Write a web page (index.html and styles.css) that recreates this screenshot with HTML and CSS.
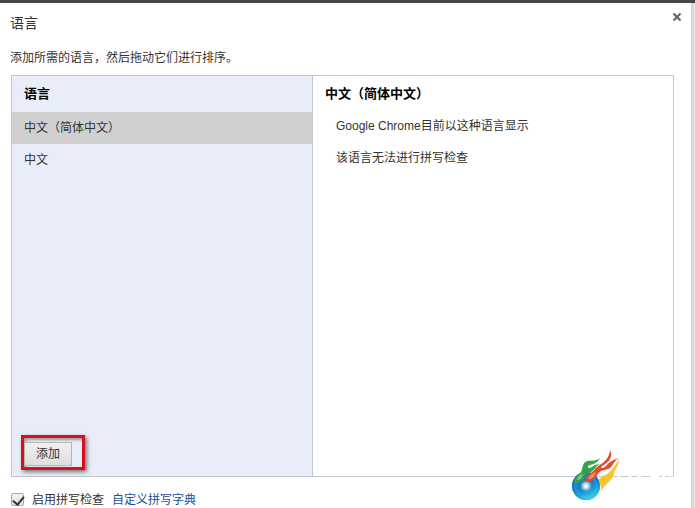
FILE: index.html
```html
<!DOCTYPE html>
<html lang="zh-CN">
<head>
  <meta charset="UTF-8" />
  <meta name="viewport" content="width=device-width, initial-scale=1.0" />
  <title>语言</title>
  <link rel="stylesheet" href="styles.css">
</head>
<body>
  <div class="dialog">
    <header class="dialog-header">
      <h1>语言</h1>
      <button type="button" class="close" aria-label="关闭">
        <svg width="10" height="10" viewBox="0 0 10 10"><path d="M1.5 1.5L8.5 8.5M8.5 1.5L1.5 8.5" stroke="#666" stroke-width="2.2" /></svg>
      </button>
    </header>
    <p class="intro">添加所需的语言，然后拖动它们进行排序。</p>

    <div class="panel">
      <section class="languages">
        <h2>语言</h2>
        <ul>
          <li class="selected">中文（简体中文）</li>
          <li>中文</li>
        </ul>
        <div class="highlight">
          <button type="button" class="add">添加</button>
        </div>
      </section>
      <section class="details">
        <h2>中文（简体中文）</h2>
        <p>Google Chrome目前以这种语言显示</p>
        <p>该语言无法进行拼写检查</p>
      </section>

      <svg class="logo" width="108" height="60" viewBox="0 0 108 60">
        <defs>
          <radialGradient id="disc" cx="50%" cy="50%" r="50%">
            <stop offset="0.25" stop-color="#4aa5e0" />
            <stop offset="0.5" stop-color="#1673c4" />
            <stop offset="0.8" stop-color="#1996d2" />
            <stop offset="1" stop-color="#0b5fae" />
          </radialGradient>
          <linearGradient id="shine" x1="0" y1="0" x2="0.4" y2="1">
            <stop offset="0" stop-color="#123aa0" stop-opacity="0.7" />
            <stop offset="0.5" stop-color="#1d8ed0" stop-opacity="0.1" />
            <stop offset="1" stop-color="#35e0ee" stop-opacity="0.8" />
          </linearGradient>
        </defs>
        <!-- pale lettering beside the disc -->
        <path d="M47 24V36M53 25H62M58 25V36M67 26L72 36M78 27H87M79 31H88M92 25V35M96 29H101" stroke="#fff" stroke-width="3" fill="none" />
        <circle cx="14" cy="37" r="14" fill="url(#disc)" />
        <circle cx="14" cy="37" r="14" fill="url(#shine)" />
        <path d="M28 45C31 36 26 34 27 30C31 26 38 27 47 10C47 18 42 21 42 25C40 33 31 35 28 45Z" fill="#f9c52c" />
        <path d="M2 34C2 29 6 26 9 23C11 19 10 14 15 12C20 11 23 13 28 9C25 15 20 15 16 17C15 19 18 20 20 18C23 15 25 16 28 15C22 18 22 23 15 25C11 26 14 34 2 34Z" fill="#35a449" />
        <path d="M5 31C6 27 8 25 11 25C10 29 8 31 5 31Z" fill="#7bc878" />
        <path d="M13 33C13 26 19 25 23 20C27 15 37 13 38 1C42 8 36 14 30 17C28 19 31 20 34 17C38 12 41 11 47 9C40 13 41 20 33 21C24 21 25 34 13 33Z" fill="#e24d2b" />
        <path d="M16 30C18 26 20 24 24 23C23 27 20 31 16 30Z" fill="#f08a65" />
        <circle cx="14" cy="37" r="4" fill="#b5c9ea" />
        <circle cx="14" cy="37" r="2" fill="#fff" />
      </svg>
    </div>

    <footer class="spelling">
      <input type="checkbox" id="spellcheck" checked>
      <label for="spellcheck">启用拼写检查</label>
      <a href="#">自定义拼写字典</a>
    </footer>
  </div>
</body>
</html>
```

FILE: styles.css
```css
* {
  box-sizing: border-box;
}
body {
  margin: 0;
  padding-right: 4px;
  border-top: 3px solid #454545;
  background: linear-gradient(to left, #e6e6e6, #cfcfcf 4px);
  color: #333;
  font-family: "Liberation Sans", "Noto Sans CJK SC", sans-serif;
  font-size: 12px;
  line-height: 16px;
  overflow: hidden;
}
h1, h2, p, ul {
  margin: 0;
  padding: 0;
}
.dialog {
  min-height: 100vh;
  padding: 8px 17px 0 10px;
  background: #fff;
}
.dialog-header {
  display: flex;
  justify-content: space-between;
  align-items: flex-start;
}
h1 {
  font-size: 14px;
  font-weight: normal;
  line-height: 24px;
}
.close {
  display: flex;
  margin-right: -8px;
  padding: 1px 0;
  border: none;
  background: none;
}
.intro {
  padding: 15px 0 9px;
}
.panel {
  position: relative;
  display: flex;
  min-height: 402px;
  margin-left: 1px;
  border: 1px solid #c3c6cc;
}
h2 {
  padding: 0 12px;
  color: #000;
  font-size: 13px;
  line-height: 36px;
}
.languages {
  display: flex;
  flex-direction: column;
  flex: 5;
  border-right: 1px solid #c3c6cc;
  background: #e9edf9;
}
.details {
  flex: 6;
}
.languages ul {
  flex: 1;
  list-style: none;
}
.languages li {
  padding: 0 12px;
  line-height: 32px;
}
.selected {
  background: #d0d0d0;
}
.details p {
  padding: 0 23px;
  line-height: 32px;
}
.details h2 {
  margin-bottom: -2px;
}
.highlight {
  display: flex;
  align-self: flex-start;
  width: 64px;
  margin: 0 0 6px 9px;
  padding: 4px 0 1px;
  border: 3px solid #d9101a;
  box-shadow: 2px 2px 4px #777, inset 2px 2px 3px #999;
}
.add {
  width: 48px;
  height: 24px;
  padding: 0;
  border: 1px solid #b5b5b5;
  background: linear-gradient(#f0f0f0, #dedede);
  color: #333;
  font: inherit;
}
.logo {
  position: absolute;
  right: -7px;
  bottom: -33px;
}
.spelling {
  display: flex;
  align-items: center;
  padding-top: 15px;
}
.spelling input {
  appearance: none;
  width: 13px;
  height: 13px;
  margin: 0 8px 2px 1px;
  border: 1px solid #aaa;
  border-radius: 2px;
  background: linear-gradient(#f2f2f2, #dedede);
}
.spelling input:checked::before {
  content: "";
  display: block;
  width: 5px;
  height: 9px;
  margin: 0 0 0 3px;
  border: solid #333;
  border-width: 0 2px 2px 0;
  transform: rotate(40deg);
}
.spelling a {
  margin-left: 8px;
  color: #15519b;
  text-decoration: none;
}
```
